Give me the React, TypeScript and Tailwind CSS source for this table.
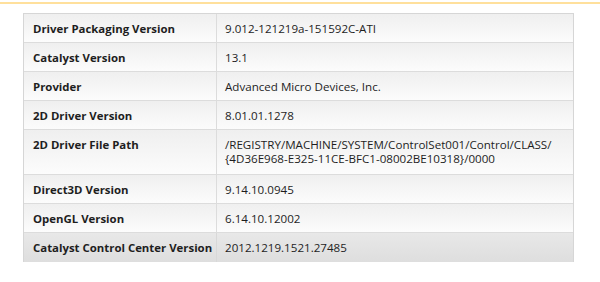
import React from 'react';

type Row = { label: string; value: React.ReactNode; tall?: boolean };

const rows: Row[] = [
  { label: 'Driver Packaging Version', value: '9.012-121219a-151592C-ATI' },
  { label: 'Catalyst Version', value: '13.1' },
  { label: 'Provider', value: 'Advanced Micro Devices, Inc.' },
  { label: '2D Driver Version', value: '8.01.01.1278' },
  {
    label: '2D Driver File Path',
    value: (
      <>
        /REGISTRY/MACHINE/SYSTEM/ControlSet001/Control/CLASS/
        <br />
        {'{4D36E968-E325-11CE-BFC1-08002BE10318}/0000'}
      </>
    ),
    tall: true,
  },
  { label: 'Direct3D Version', value: '9.14.10.0945' },
  { label: 'OpenGL Version', value: '6.14.10.12002' },
];

const App = () => {
  return (
    <div
      className="w-[600px] h-[282px] bg-white overflow-hidden text-[#1e1e1e]"
      style={{ fontFamily: '"Open Sans", "Noto Sans", sans-serif' }}
    >
      <div className="h-[2px] bg-white" />
      <div className="h-[2px] bg-[#ffe09c]" />
      <div className="pt-[9px] pl-[23px]">
        <div className="w-[551px] border-x border-t border-[#d6d6d6]">
          {rows.map((r) => (
            <div
              key={r.label}
              className={`flex border-b border-[#dcdcdc] bg-gradient-to-b from-[#efefef] to-[#fcfcfc] ${
                r.tall ? 'h-[45px]' : 'h-[29px]'
              }`}
            >
              <div className="w-[193px] shrink-0 border-r border-[#dcdcdc] pl-[9px] pt-[8px] text-[11.4px] leading-[14px] font-bold whitespace-nowrap">
                {r.label}
              </div>
              <div className="pl-[8px] pt-[8px] text-[11.6px] leading-[14px] whitespace-nowrap">{r.value}</div>
            </div>
          ))}
          <div className="flex h-[29px] bg-gradient-to-b from-[#e8e8e8] to-[#dedede]">
            <div className="w-[193px] shrink-0 border-r border-[#d8d8d8] pl-[9px] pt-[8px] text-[11.4px] leading-[14px] font-bold whitespace-nowrap">
              Catalyst Control Center Version
            </div>
            <div className="pl-[8px] pt-[8px] text-[11.6px] leading-[14px] whitespace-nowrap">2012.1219.1521.27485</div>
          </div>
        </div>
      </div>
    </div>
  );
};

export default App;
